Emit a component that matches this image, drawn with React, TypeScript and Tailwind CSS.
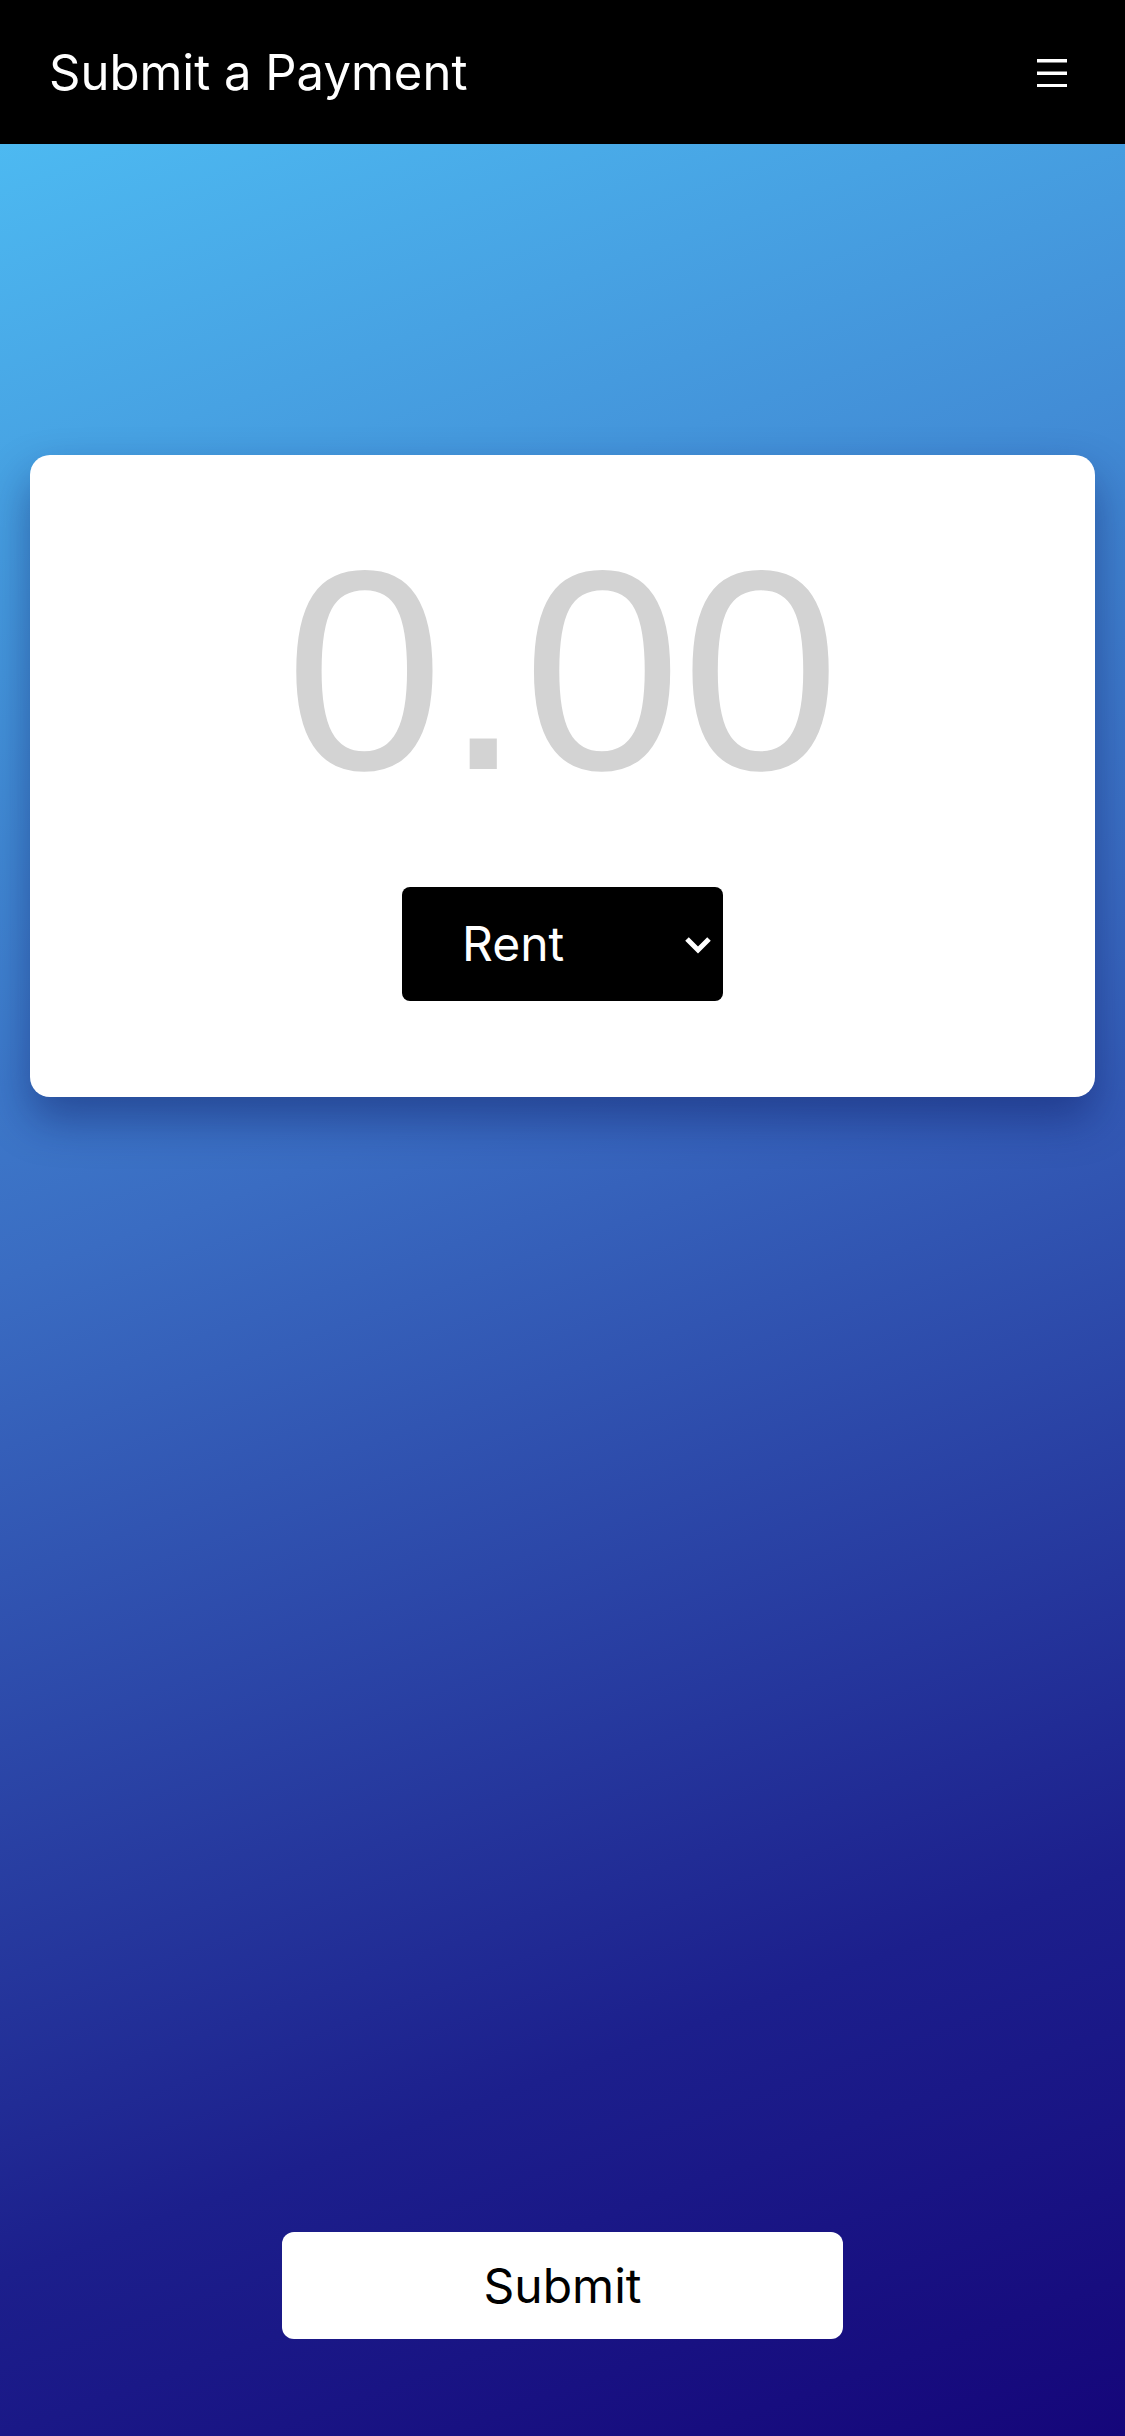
import React from 'react';

const App: React.FC = () => {
  return (
    <div className="min-h-screen flex flex-col font-['Inter',sans-serif] bg-[linear-gradient(160deg,#4fc3f7_0%,#3a6cc2_45%,#1c1f8c_80%,#15067a_100%)]">
      <header className="h-[144px] bg-black flex items-center justify-between pl-[49px] pr-[58px]">
        <h1 className="text-white text-[49px] leading-none">Submit a Payment</h1>
        <button className="text-white" aria-label="Menu">
          <svg width="30" height="30" viewBox="0 0 30 30">
            <rect x="0" y="2" width="30" height="3.5" fill="white" />
            <rect x="0" y="14.5" width="30" height="3.5" fill="white" />
            <rect x="0" y="27" width="30" height="3.5" fill="white" />
          </svg>
        </button>
      </header>

      <main className="flex-1 flex flex-col items-center px-[30px] pt-[311px] pb-[97px]">
        <div className="w-full bg-white rounded-[20px] shadow-[0_22px_45px_rgba(10,20,90,0.45)] flex flex-col items-center pt-[73px] pb-[96px]">
          <div className="font-['Liberation_Sans',Arial,sans-serif] text-[285px] leading-none text-[#d3d3d3]">
            0.00
          </div>
          <div className="relative mt-[74px]">
            <select className="appearance-none w-[321px] h-[114px] bg-black text-white text-[48px] rounded-lg pl-[60px] outline-none">
              <option>Rent</option>
            </select>
            <svg
              className="absolute right-[11px] top-[49px] pointer-events-none"
              width="28"
              height="18"
              viewBox="0 0 28 18"
            >
              <path d="M3 3 L14 14 L25 3" stroke="white" strokeWidth="5" fill="none" />
            </svg>
          </div>
        </div>

        <button className="mt-auto w-[561px] h-[107px] bg-white rounded-xl text-black text-[48px]">
          Submit
        </button>
      </main>
    </div>
  );
};

export default App;
